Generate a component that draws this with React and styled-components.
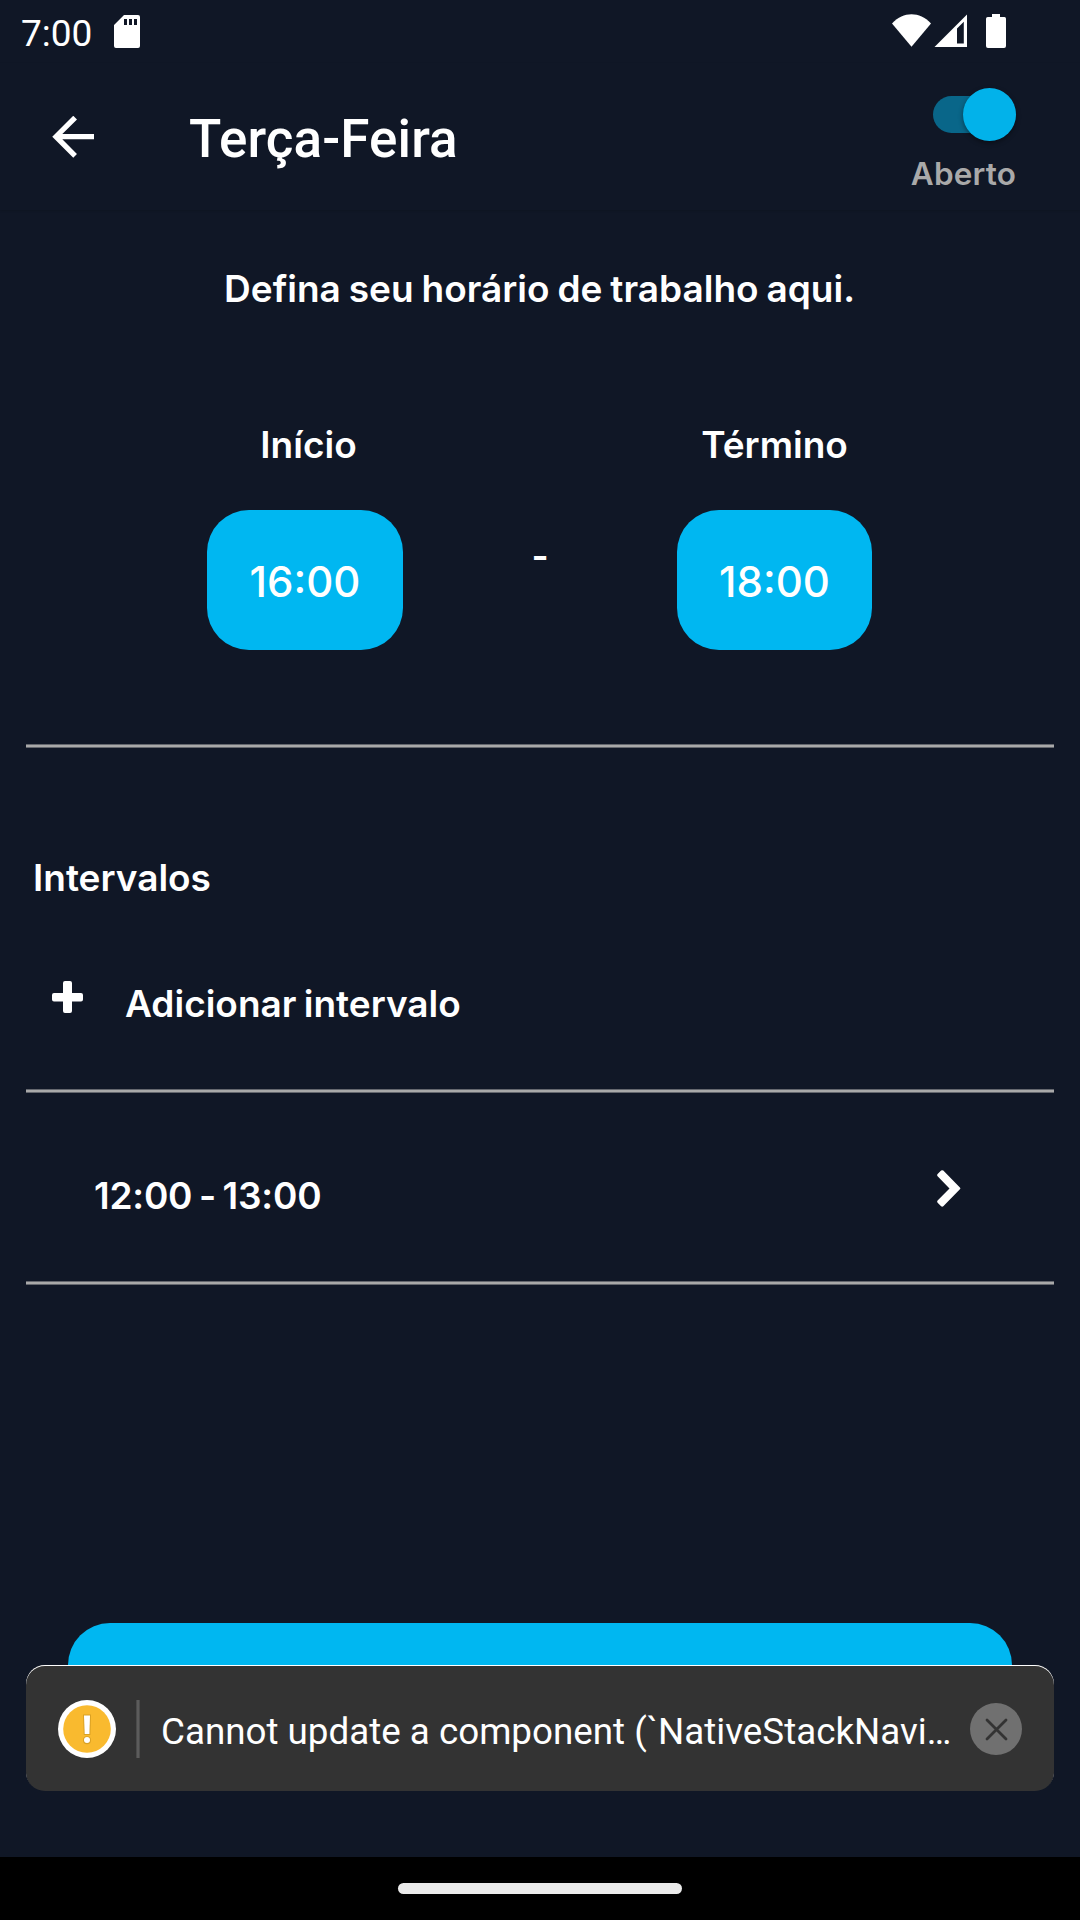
import React from 'react';
import styled, { createGlobalStyle, css } from 'styled-components';

const color = {
  bg: '#101726',
  accent: '#00b7f1',
  text: '#ffffff',
  muted: '#a9a9a9',
};

const GlobalStyle = createGlobalStyle`
  * { box-sizing: border-box; }
  body { margin: 0; background: ${color.bg}; }
  button { border: 0; padding: 0; background: none; color: inherit; font: inherit; }
  svg { display: block; flex: none; }
`;

const Screen = styled.div`
  position: relative;
  display: flex;
  flex-direction: column;
  width: 1080px;
  height: 1920px;
  overflow: hidden;
  background: ${color.bg};
  color: ${color.text};
  font-family: Inter, "Open Sans", sans-serif;
`;

const StatusBar = styled.div`
  display: flex;
  justify-content: space-between;
  height: 63px;
  padding: 13px 73px 0 21px;
`;

const StatusGroup = styled.div`
  display: flex;
  align-items: flex-start;
`;

const Clock = styled.span`
  width: 93px;
  padding-top: 1px;
  font: 400 37px/40px Roboto, sans-serif;
`;

const Header = styled.header`
  display: flex;
  align-items: center;
  height: 147px;
  padding: 0 64px 0 52px;
  box-shadow: 0 1px 2px rgba(0, 0, 0, 0.12);
`;

const BackButton = styled.button`
  width: 137px;
`;

const Title = styled.h1`
  flex: 1;
  margin: 5px 0 0;
  font: 500 53px/66px Roboto, sans-serif;
  letter-spacing: 0.1px;
`;

const OpenToggle = styled.div`
  display: flex;
  flex-direction: column;
  align-items: flex-end;
  align-self: flex-start;
  padding-top: 25px;
`;

const SwitchTrack = styled.div`
  display: flex;
  align-items: center;
  justify-content: flex-end;
  width: 83px;
  height: 37px;
  margin: 8px 0;
  border-radius: 19px;
  background: #096689;
`;

const SwitchThumb = styled.div`
  flex: none;
  width: 53px;
  height: 53px;
  border-radius: 50%;
  background: #02b2ea;
  box-shadow: 0 2px 5px rgba(0, 0, 0, 0.4);
`;

const ToggleLabel = styled.span`
  margin-top: 13px;
  color: ${color.muted};
  font-size: 31.5px;
  font-weight: 600;
  line-height: 40px;
  letter-spacing: 0.15px;
`;

const Main = styled.main`
  display: flex;
  flex: 1;
  flex-direction: column;
  padding: 54px 26px 0;
`;

const label = css`
  margin: 0;
  font-size: 37px;
  font-weight: 600;
  line-height: 50px;
  white-space: nowrap;
`;

const Intro = styled.p`
  ${label}
  padding-right: 1px;
  text-align: center;
  word-spacing: -1.4px;
`;

const HoursRow = styled.section`
  display: grid;
  grid-template-columns: 196px 274px 195px;
  margin: 106px 0 0 181px;
`;

const HourColumn = styled.div`
  display: flex;
  flex-direction: column;
  align-items: center;
`;

const HourLabel = styled.span`
  ${label}
  padding-left: ${(p) => p.$shift || 0}px;
`;

const HourButton = styled.button`
  width: 100%;
  height: 140px;
  margin-top: 40px;
  padding-top: 3px;
  border-radius: 42px;
  background: ${color.accent};
  font-size: 42px;
  font-weight: 500;
`;

const Dash = styled.span`
  ${label}
  padding-top: 111px;
  text-align: center;
`;

const Divider = styled.hr`
  width: 100%;
  height: 4px;
  margin: ${(p) => p.$top || 0}px 0 0;
  border: solid #64676e;
  border-width: 1px 0;
  background: ${color.muted};
`;

const SectionTitle = styled.h2`
  ${label}
  margin: 105px 0 0 7px;
`;

const AddRow = styled.button`
  display: flex;
  align-items: flex-start;
  gap: 42px;
  margin: 76px 0 0 26px;
  color: ${color.text};
`;

const AddLabel = styled.span`
  ${label}
  word-spacing: -2px;
`;

const IntervalRow = styled.button`
  display: flex;
  align-items: center;
  justify-content: space-between;
  height: 188px;
  padding: 2px 93px 0 68px;
  color: ${color.text};
`;

const IntervalText = styled.span`
  ${label}
  padding-top: 16px;
  letter-spacing: -0.2px;
  word-spacing: -2.5px;
`;

const SaveButton = styled.button`
  height: 140px;
  margin: 338px 42px 0;
  border-radius: 42px;
  background: ${color.accent};
`;

const Toast = styled.div`
  position: absolute;
  left: 26px;
  right: 26px;
  bottom: 129px;
  display: flex;
  align-items: center;
  height: 126px;
  padding: 2px 32px 0 32px;
  border-radius: 19px;
  background: #333333;
  box-shadow: inset 0 1px 0 #ffffff;
`;

const ToastRule = styled.div`
  width: 4px;
  height: 58px;
  margin: 0 21px 0 20px;
  border: solid #4b4b4b;
  border-width: 0 1px;
  background: #5c5c5c;
`;

const ToastText = styled.span`
  flex: 1;
  padding-top: 6px;
  font: 400 36.75px/46px Roboto, sans-serif;
  white-space: nowrap;
`;

const NavBar = styled.div`
  display: flex;
  justify-content: center;
  height: 63px;
  padding-top: 26px;
  background: #000000;
`;

const NavPill = styled.div`
  width: 284px;
  height: 11px;
  border-radius: 6px;
  background: #ebebeb;
`;

const IconOffset = styled.div`
  padding-top: ${(p) => p.$top}px;
`;

const SdCardIcon = () => (
  <svg width="26" height="33" viewBox="0 0 26 33">
    <path
      fill="#fff"
      fillRule="evenodd"
      d="M10 0H24a2 2 0 0 1 2 2V31a2 2 0 0 1-2 2H2a2 2 0 0 1-2-2V10zM10 4V10H13V4zM15 4V10H18V4zM20 4V10H23V4z"
    />
  </svg>
);

const SignalIcons = () => (
  <svg width="115" height="34" viewBox="0 0 115 34">
    <g fill="#fff">
      <path d="M0 9.500C6 3 12.500 .2 19.500 .2S33 3 39 9.500L19.500 32.800z" />
      <path
        fillRule="evenodd"
        d="M75 .5V33H42.500zM65 14.500V29.500H71.800V7.700z"
      />
      <path d="M100 0H108V3H112.500A1.800 1.800 0 0 1 114 4.800V32A2 2 0 0 1 112 34H96A2 2 0 0 1 94 32V4.800A1.800 1.800 0 0 1 95.800 3H100z" />
    </g>
  </svg>
);

const BackIcon = () => (
  <svg width="42" height="42" viewBox="3.900 4.100 16 16">
    <path fill="#fff" d="M20 11H7.830l5.590-5.590L12 4l-8 8 8 8 1.410-1.410L7.830 13H20v-2z" />
  </svg>
);

const PlusIcon = () => (
  <svg width="31" height="34" viewBox="0 -2 31 34">
    <path
      fill="#fff"
      d="M13 0H18a2 2 0 0 1 2 2V12H29a2 2 0 0 1 2 2V18.500a2 2 0 0 1-2 2H20V30a2 2 0 0 1-2 2H13a2 2 0 0 1-2-2V20.500H2a2 2 0 0 1-2-2V14a2 2 0 0 1 2-2H11V2a2 2 0 0 1 2-2z"
    />
  </svg>
);

const ChevronIcon = () => (
  <svg width="24" height="37" viewBox="0 0 24 37">
    <path
      fill="#fff"
      d="M6.300 .6 22.900 17.500Q23.800 18.400 22.900 19.300L6.300 36.200Q5.200 37.100 4.100 36.200L.6 32.700Q-.3 31.600 .6 30.500L12.500 18.400.6 6.300Q-.3 5.200 .6 4.100L4.100 .6Q5.200-.3 6.300 .6z"
    />
  </svg>
);

const WarningIcon = () => (
  <svg width="58" height="58" viewBox="0 0 58 58">
    <circle cx="29" cy="29" r="29" fill="#fff" />
    <circle cx="29" cy="29" r="23.800" fill="#f9ba2f" />
    <g fill="#6b4a00" opacity="0.22">
      <path d="M25 14.500H33L32.400 35H25.800z" />
      <circle cx="29" cy="40.300" r="4" />
    </g>
    <path fill="#fff" d="M26 15.500H32L31.400 34H26.700z" />
    <circle cx="29" cy="40" r="3" fill="#fff" />
  </svg>
);

const CloseIcon = () => (
  <svg width="52" height="52" viewBox="0 0 52 52">
    <circle cx="26" cy="26" r="26" fill="#707070" />
    <path d="M17 17 36 36M36 17 17 36" stroke="#333" strokeWidth="2.800" strokeLinecap="round" />
  </svg>
);

export default function App() {
  return (
    <Screen>
      <GlobalStyle />
      <StatusBar>
        <StatusGroup>
          <Clock>7:00</Clock>
          <IconOffset $top={2}>
            <SdCardIcon />
          </IconOffset>
        </StatusGroup>
        <StatusGroup>
          <IconOffset $top={1}>
            <SignalIcons />
          </IconOffset>
        </StatusGroup>
      </StatusBar>

      <Header>
        <BackButton aria-label="Voltar">
          <BackIcon />
        </BackButton>
        <Title>Terça-Feira</Title>
        <OpenToggle>
          <SwitchTrack>
            <SwitchThumb />
          </SwitchTrack>
          <ToggleLabel>Aberto</ToggleLabel>
        </OpenToggle>
      </Header>

      <Main>
        <Intro>Defina seu horário de trabalho aqui.</Intro>
        <HoursRow>
          <HourColumn>
            <HourLabel $shift={7}>Início</HourLabel>
            <HourButton>16:00</HourButton>
          </HourColumn>
          <Dash>-</Dash>
          <HourColumn>
            <HourLabel>Término</HourLabel>
            <HourButton>18:00</HourButton>
          </HourColumn>
        </HoursRow>
        <Divider $top={94} />
        <SectionTitle>Intervalos</SectionTitle>
        <AddRow>
          <PlusIcon />
          <AddLabel>Adicionar intervalo</AddLabel>
        </AddRow>
        <Divider $top={60} />
        <IntervalRow>
          <IntervalText>12:00 - 13:00</IntervalText>
          <ChevronIcon />
        </IntervalRow>
        <Divider />
        <SaveButton aria-label="Salvar" />
      </Main>

      <NavBar>
        <NavPill />
      </NavBar>

      <Toast>
        <WarningIcon />
        <ToastRule />
        <ToastText>Cannot update a component (`NativeStackNavi…</ToastText>
        <CloseIcon />
      </Toast>
    </Screen>
  );
}
